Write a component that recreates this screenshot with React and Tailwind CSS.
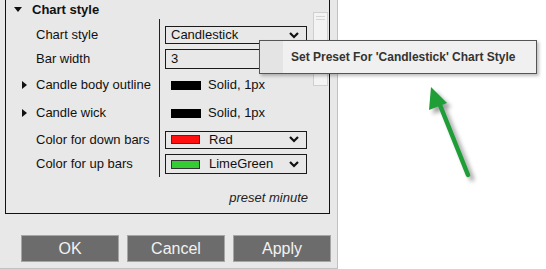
import React from 'react';

// small triangles used by the property tree
const Down = () => (
  <svg width="8" height="6" viewBox="0 0 8 6" className="shrink-0">
    <path d="M0 0h8L4 5z" fill="#111" />
  </svg>
);
const Right = () => (
  <svg width="5" height="8" viewBox="0 0 5 8" className="shrink-0">
    <path d="M0 0l5 4-5 4z" fill="#111" />
  </svg>
);
const Chevron = () => (
  <svg width="10" height="7" viewBox="0 0 10 7" className="shrink-0">
    <path d="M1 1l4 4 4-4" fill="none" stroke="#111" strokeWidth="2.2" />
  </svg>
);

function Select({ children, swatch }) {
  return (
    <div className="flex items-center h-full border border-[#1a1a1a] pl-[5px] pr-[7px]">
      {swatch && <span className={`w-[29px] h-[9px] border border-[#333] mr-[9px] ${swatch}`} />}
      <span className="flex-1">{children}</span>
      <Chevron />
    </div>
  );
}

function Row({ label, arrow, h, children }) {
  return (
    <div className="flex" style={{ height: h }}>
      <div className="w-[153px] flex items-center">
        <span className="w-[30px] flex justify-end pr-[9px]">{arrow && <Right />}</span>
        <span>{label}</span>
      </div>
      <div className="flex-1 border-l border-[#222] flex flex-col justify-center pl-[5px] pr-[4px]">{children}</div>
    </div>
  );
}

const Solid = () => (
  <div className="flex items-center pl-[6px]">
    <span className="w-[30px] h-[9px] bg-black mr-[7px]" />
    <span>Solid, 1px</span>
  </div>
);

export default function App() {
  return (
    <div className="relative w-[546px] h-[269px] bg-white overflow-hidden text-[13px] text-[#111]" style={{ fontFamily: '"Liberation Sans", Arial, sans-serif' }}>
      <div className="w-[338px] h-[269px] bg-[#e8e8e8] border-r border-b border-[#c2c2c2] flex flex-col">
        {/* property panel */}
        <div className="ml-[5px] w-[325px] h-[214px] border-l border-r border-b border-[#111] flex">
          <div className="flex-1 flex flex-col">
            <div className="h-[19px] flex items-center pl-[8px]">
              <Down />
              <span className="ml-[10px] font-bold">Chart style</span>
            </div>
            <div className="h-[4px] ml-[153px] border-l border-[#222]" />
            <Row label="Chart style" h={24}>
              <div className="h-[18px]"><Select>Candlestick</Select></div>
            </Row>
            <Row label="Bar width" h={24}>
              <div className="h-[20px] border border-[#1a1a1a] pl-[5px] flex items-center">3</div>
            </Row>
            <Row label="Candle body outline" arrow h={28}><Solid /></Row>
            <Row label="Candle wick" arrow h={28}><Solid /></Row>
            <Row label="Color for down bars" h={25}>
              <div className="h-[18px]"><Select swatch="bg-[#ff1010]">Red</Select></div>
            </Row>
            <Row label="Color for up bars" h={24}>
              <div className="h-[20px]"><Select swatch="bg-[#33cc33]">LimeGreen</Select></div>
            </Row>
            <div className="h-[1px] ml-[153px] border-l border-[#222]" />
            <div className="flex-1 flex items-end justify-end pr-[3px] pb-[6px] italic text-[#222]">preset minute</div>
          </div>
          {/* scrollbar */}
          <div className="w-[18px] pt-[12px] pl-[2px] pr-[1px]">
            <div className="h-[74px] bg-[#f3f3f3] border border-[#cfcfcf] flex flex-col items-center pt-[3px] gap-[2px]">
              <span className="w-[9px] h-px bg-[#d4d4d4]" />
              <span className="w-[9px] h-px bg-[#d4d4d4]" />
            </div>
          </div>
        </div>
        {/* buttons */}
        <div className="flex gap-[8px] pl-[21px] mt-[21px]">
          {['OK', 'Cancel', 'Apply'].map(b => (
            <div key={b} className="w-[98px] h-[27px] bg-[#6c6c6c] border border-[#a6a6a6] text-[#f2f2f2] text-[16px] flex items-center justify-center">{b}</div>
          ))}
        </div>
      </div>

      {/* context menu */}
      <div className="absolute left-[259px] top-[40px] w-[278px] h-[34px] bg-[#f0f0f0] border border-[#555] shadow-[2px_2px_3px_rgba(0,0,0,0.25)] flex">
        <div className="w-[23px] bg-[#e4e4e4]" />
        <div className="flex items-center pl-[8px] font-bold text-[12px] text-[#333]">Set Preset For 'Candlestick' Chart Style</div>
      </div>

      {/* annotation arrow */}
      <svg className="absolute left-0 top-0" width="546" height="269">
        <defs>
          <filter id="sh" x="-50%" y="-50%" width="200%" height="200%">
            <feGaussianBlur stdDeviation="2" />
          </filter>
        </defs>
        <g transform="translate(4,4)" opacity="0.45" filter="url(#sh)">
          <path d="M468 175L438 100" stroke="#333" strokeWidth="4.5" strokeLinecap="round" />
          <path d="M431 87L429 110L447 103z" fill="#333" />
        </g>
        <path d="M468 175L438 100" stroke="#1f9e38" strokeWidth="4.5" strokeLinecap="round" />
        <path d="M431 87L429 110L447 103z" fill="#1f9e38" />
      </svg>
    </div>
  );
}
